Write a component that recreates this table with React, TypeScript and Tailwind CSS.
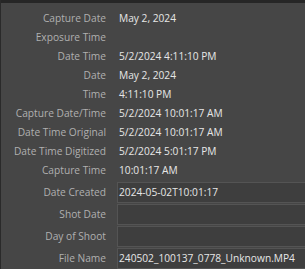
const plain: [string, string][] = [
  ["Capture Date", "May 2, 2024"],
  ["Exposure Time", ""],
  ["Date Time", "5/2/2024 4:11:10 PM"],
  ["Date", "May 2, 2024"],
  ["Time", "4:11:10 PM"],
  ["Capture Date/Time", "5/2/2024 10:01:17 AM"],
  ["Date Time Original", "5/2/2024 10:01:17 AM"],
  ["Date Time Digitized", "5/2/2024 5:01:17 PM"],
  ["Capture Time", "10:01:17 AM"],
]

const boxed: [string, string][] = [
  ["Date Created", "2024-05-02T10:01:17"],
  ["Shot Date", ""],
  ["Day of Shoot", ""],
  ["File Name", "240502_100137_0778_Unknown.MP4"],
]

export default function App() {
  return (
    <div
      className="w-[305px] h-[269px] overflow-hidden bg-[#464646] border-l border-[#2a2a2a] flex flex-col text-[10.2px]"
      style={{ fontFamily: "'Open Sans', 'Noto Sans', sans-serif" }}
    >
      <div className="h-[3px] bg-[#262626] shrink-0" />
      <div className="flex flex-col pt-[6px]">
        {plain.map(([label, value]) => (
          <div key={label} className="flex items-center h-[19px]">
            <div className="w-[105px] text-right text-[#b0b0b0] shrink-0">{label}</div>
            <div className="pl-[13px] text-[#e6e6e6] whitespace-nowrap">{value}</div>
          </div>
        ))}
      </div>
      <div className="flex flex-col gap-[1px] mt-[2px]">
        {boxed.map(([label, value]) => (
          <div key={label} className="flex items-center h-[21px]">
            <div className="w-[105px] text-right text-[#b0b0b0] shrink-0">{label}</div>
            <div className="ml-[11px] flex-1 h-full flex items-center pl-[1px] bg-[#3e3e3e] border border-r-0 border-[#545454] text-[#e6e6e6] whitespace-nowrap">
              {value}
            </div>
          </div>
        ))}
      </div>
    </div>
  )
}
